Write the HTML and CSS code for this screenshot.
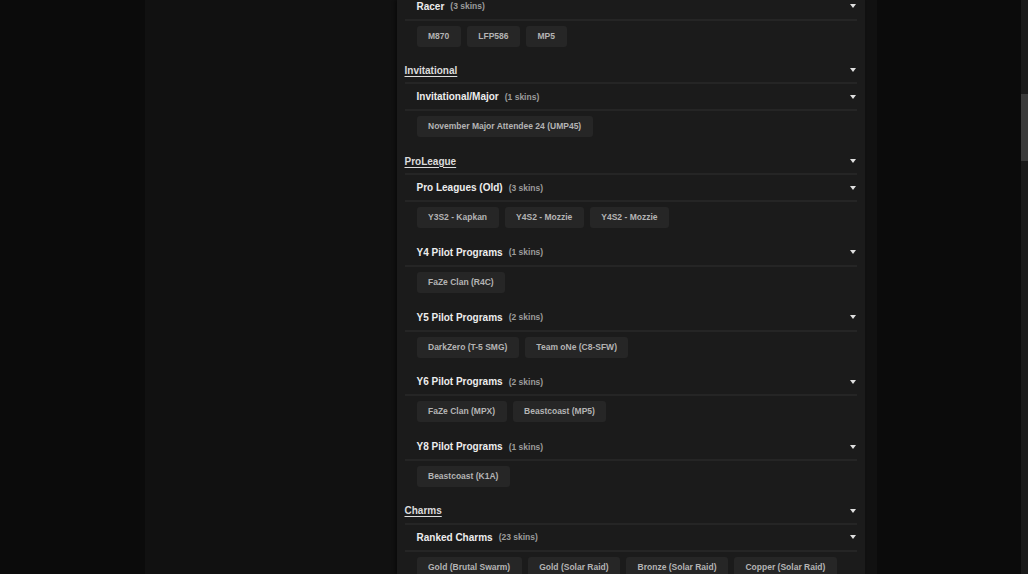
FILE: index.html
```html
<!DOCTYPE html>
<html>
<head>
	<meta charset="utf-8">
	<title>Skins</title>
	<link rel="stylesheet" href="styles.css">
</head>
<body>
<div class="page">
	<div class="main">
		<div class="wrap">
			<div class="sidebar"></div>
			<div class="panel">
				<div class="list">
					<!-- Racer (tail of the previous section) -->
					<div class="group">
						<div class="group-head"><span class="group-name">Racer</span><span class="count">(3 skins)</span><i class="caret"></i></div>
						<div class="tags">
							<span class="tag">M870</span>
							<span class="tag">LFP586</span>
							<span class="tag">MP5</span>
						</div>
					</div>

					<div class="section-head"><a class="section-name" href="#">Invitational</a><i class="caret"></i></div>
					<div class="group">
						<div class="group-head"><span class="group-name">Invitational/Major</span><span class="count">(1 skins)</span><i class="caret"></i></div>
						<div class="tags">
							<span class="tag">November Major Attendee 24 (UMP45)</span>
						</div>
					</div>

					<div class="section-head"><a class="section-name" href="#">ProLeague</a><i class="caret"></i></div>
					<div class="group">
						<div class="group-head"><span class="group-name">Pro Leagues (Old)</span><span class="count">(3 skins)</span><i class="caret"></i></div>
						<div class="tags">
							<span class="tag">Y3S2 - Kapkan</span>
							<span class="tag">Y4S2 - Mozzie</span>
							<span class="tag">Y4S2 - Mozzie</span>
						</div>
					</div>
					<div class="group">
						<div class="group-head"><span class="group-name">Y4 Pilot Programs</span><span class="count">(1 skins)</span><i class="caret"></i></div>
						<div class="tags">
							<span class="tag">FaZe Clan (R4C)</span>
						</div>
					</div>
					<div class="group">
						<div class="group-head"><span class="group-name">Y5 Pilot Programs</span><span class="count">(2 skins)</span><i class="caret"></i></div>
						<div class="tags">
							<span class="tag">DarkZero (T-5 SMG)</span>
							<span class="tag">Team oNe (C8-SFW)</span>
						</div>
					</div>
					<div class="group">
						<div class="group-head"><span class="group-name">Y6 Pilot Programs</span><span class="count">(2 skins)</span><i class="caret"></i></div>
						<div class="tags">
							<span class="tag">FaZe Clan (MPX)</span>
							<span class="tag">Beastcoast (MP5)</span>
						</div>
					</div>
					<div class="group">
						<div class="group-head"><span class="group-name">Y8 Pilot Programs</span><span class="count">(1 skins)</span><i class="caret"></i></div>
						<div class="tags">
							<span class="tag">Beastcoast (K1A)</span>
						</div>
					</div>

					<div class="section-head"><a class="section-name" href="#">Charms</a><i class="caret"></i></div>
					<div class="group">
						<div class="group-head"><span class="group-name">Ranked Charms</span><span class="count">(23 skins)</span><i class="caret"></i></div>
						<div class="tags">
							<span class="tag">Gold (Brutal Swarm)</span>
							<span class="tag">Gold (Solar Raid)</span>
							<span class="tag">Bronze (Solar Raid)</span>
							<span class="tag">Copper (Solar Raid)</span>
						</div>
					</div>
				</div>
			</div>
		</div>
	</div>
	<div class="scrollbar"><div class="thumb"></div></div>
</div>
</body>
</html>
```

FILE: styles.css
```css
html, body { margin: 0; height: 100%; }
body {
	background: #0b0b0b;
	font-family: "Liberation Sans", Arial, sans-serif;
	overflow: hidden;
}
.page { display: flex; height: 100vh; }
.main { flex: 1; display: flex; justify-content: center; }
.wrap {									/* centered column */
	width: 732px;
	display: flex;
	background: #111111;
	padding-right: 12px;
	box-sizing: border-box;
}
.sidebar { width: 252px; }
.panel {
	width: 468px;
	background: #1b1b1b;
	padding: 0 8px;
	box-sizing: border-box;
	overflow: hidden;
	box-shadow: -2px 0 3px rgba(0, 0, 0, 0.4);
}
.list { margin-top: -6.5px; }			/* page is scrolled a bit */

/* section and group headers */
.section-head, .group-head {
	display: flex;
	align-items: center;
	border-bottom: 2px solid #252525;
	padding-right: 1px;
}
.section-head { height: 24px; }
.section-name {
	font-size: 10px; font-weight: bold;
	color: #dcdcdc;
	text-decoration: underline;
	text-underline-offset: 2px;
}
.group-head { height: 25px; padding-left: 12px; }
.group-name { font-size: 10px; font-weight: bold; color: #ededed; }
.count { font-size: 8.5px; font-weight: bold; color: #9c9c9c; margin-left: 6px; }
.caret {								/* small down arrow */
	margin-left: auto;
	width: 0; height: 0;
	border-left: 3px solid transparent;
	border-right: 3px solid transparent;
	border-top: 4px solid #e0e0e0;
}

/* skin tags */
.tags {
	display: flex; flex-wrap: wrap; gap: 6px;
	padding: 5px 0 11.75px 12px;
}
.tag {
	height: 21px; line-height: 21px;
	padding: 0 11.5px;
	background: #262626;
	border-radius: 3px;
	font-size: 8.5px; font-weight: bold;
	color: #b4b4b4;
	white-space: nowrap;
}

/* fake scrollbar of the scrolled page */
.scrollbar { width: 7px; background: #1a1a1a; position: relative; }
.thumb {
	position: absolute; left: 0; right: 0;
	top: 94px; height: 67px;
	background: #3a3a3a;
}
```
